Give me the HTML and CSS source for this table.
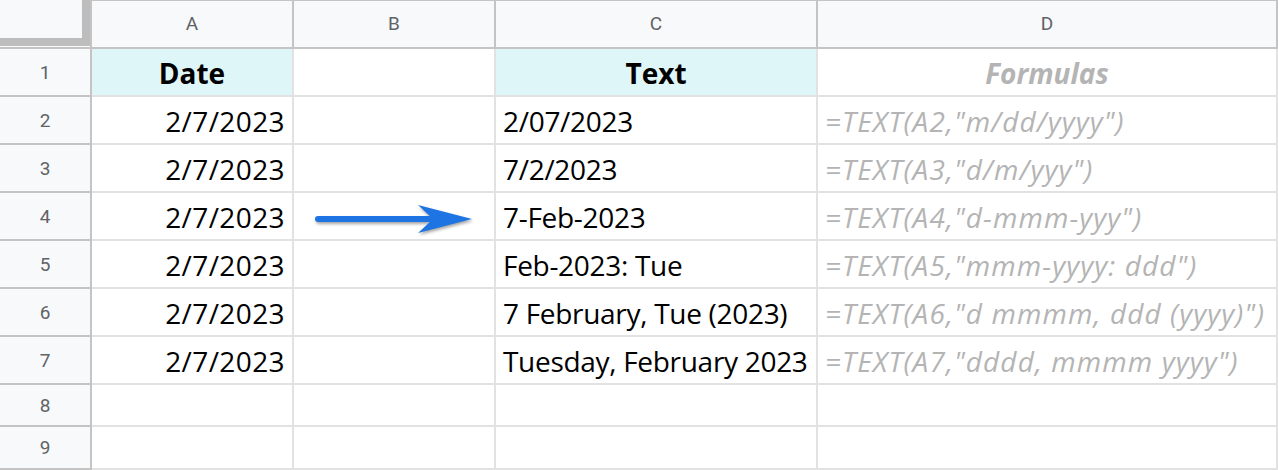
FILE: index.html
```html
<!DOCTYPE html>
<html>
<head>
<meta charset="utf-8">
<link rel="stylesheet" href="styles.css">
</head>
<body>
<div class="sheet">
  <div class="grid">
    <div class="corner"><div class="corner-inner"></div></div>
    <div class="colhead">A</div>
    <div class="colhead">B</div>
    <div class="colhead">C</div>
    <div class="colhead last">D</div>

    <div class="rowhead">1</div>
    <div class="cell hl center bold">Date</div>
    <div class="cell"></div>
    <div class="cell hl center bold">Text</div>
    <div class="cell last center formula bold">Formulas</div>

    <div class="rowhead">2</div>
    <div class="cell right date">2/7/2023</div>
    <div class="cell"></div>
    <div class="cell txt">2/07/2023</div>
    <div class="cell last formula">=TEXT(A2,"m/dd/yyyy")</div>

    <div class="rowhead">3</div>
    <div class="cell right date">2/7/2023</div>
    <div class="cell"></div>
    <div class="cell txt">7/2/2023</div>
    <div class="cell last formula">=TEXT(A3,"d/m/yyy")</div>

    <div class="rowhead">4</div>
    <div class="cell right date">2/7/2023</div>
    <div class="cell"></div>
    <div class="cell txt">7-Feb-2023</div>
    <div class="cell last formula">=TEXT(A4,"d-mmm-yyy")</div>

    <div class="rowhead">5</div>
    <div class="cell right date">2/7/2023</div>
    <div class="cell"></div>
    <div class="cell txt">Feb-2023: Tue</div>
    <div class="cell last formula">=TEXT(A5,"mmm-yyyy: ddd")</div>

    <div class="rowhead">6</div>
    <div class="cell right date">2/7/2023</div>
    <div class="cell"></div>
    <div class="cell txt">7 February, Tue (2023)</div>
    <div class="cell last formula">=TEXT(A6,"d mmmm, ddd (yyyy)")</div>

    <div class="rowhead">7</div>
    <div class="cell right date">2/7/2023</div>
    <div class="cell"></div>
    <div class="cell txt">Tuesday, February 2023</div>
    <div class="cell last formula">=TEXT(A7,"dddd, mmmm yyyy")</div>

    <div class="rowhead short">8</div>
    <div class="cell short"></div>
    <div class="cell short"></div>
    <div class="cell short"></div>
    <div class="cell short last"></div>

    <div class="rowhead short final">9</div>
    <div class="cell short final"></div>
    <div class="cell short final"></div>
    <div class="cell short final"></div>
    <div class="cell short final last"></div>
  </div>
  <svg class="arrow" width="180" height="50" viewBox="0 0 180 50">
    <line x1="13" y1="25" x2="128" y2="25" stroke="#1f74e3" stroke-width="6" stroke-linecap="round"/>
    <polygon points="113,11 167,25 113,39 128,25" fill="#1f74e3"/>
  </svg>
</div>
</body>
</html>
```

FILE: styles.css
```css
html, body {
  margin: 0;
  padding: 0;
  background: #ffffff;
}

.sheet {
  position: relative;
  width: 1278px;
  height: 470px;
  overflow: hidden;
}

.grid {
  display: grid;
  grid-template-columns: 92px 202px 202px 322px 460px;
  grid-template-rows: 49px repeat(7, 48px) 42px 43px;
}

.corner {
  box-sizing: border-box;
  background: #f8f9fa;
  border-top: 1px solid #c4c4c4;
  border-right: 2px solid #c4c4c4;
  border-bottom: 2px solid #c4c4c4;
}

.corner-inner {
  box-sizing: border-box;
  width: 90px;
  height: 46px;
  border-right: 8px solid #bdbdbd;
  border-bottom: 8px solid #bdbdbd;
  background: #f8f9fa;
  margin-top: -1px;
}

.colhead {
  box-sizing: border-box;
  background: #f8f9fa;
  border-top: 1px solid #c4c4c4;
  border-right: 2px solid #c4c4c4;
  border-bottom: 2px solid #c4c4c4;
  display: flex;
  align-items: center;
  justify-content: center;
  font-family: Roboto, "Liberation Sans", sans-serif;
  font-size: 19px;
  color: #5f6368;
  padding-bottom: 1px;
}

.rowhead {
  box-sizing: border-box;
  background: #f8f9fa;
  border-right: 2px solid #c4c4c4;
  border-bottom: 2px solid #c4c4c4;
  display: flex;
  align-items: center;
  justify-content: center;
  font-family: Roboto, "Liberation Sans", sans-serif;
  font-size: 19px;
  color: #5f6368;
}

.cell {
  box-sizing: border-box;
  border-right: 2px solid #e2e2e2;
  border-bottom: 2px solid #e2e2e2;
  display: flex;
  align-items: center;
  padding: 2px 7px 0 7px;
  font-family: "Open Sans", "Noto Sans", sans-serif;
  font-size: 28px;
  color: #000000;
  white-space: nowrap;
  overflow: hidden;
}

.hl {
  background: #dff6f8;
}

.center {
  justify-content: center;
}

.right {
  justify-content: flex-end;
}

.bold {
  font-weight: 700;
}

.date {
  letter-spacing: 0.4px;
}

.txt {
  letter-spacing: -0.3px;
}

.formula {
  color: #b4b4b4;
  font-style: italic;
  letter-spacing: 1.1px;
}

.formula.bold {
  letter-spacing: 0;
}

.arrow {
  position: absolute;
  left: 305px;
  top: 194px;
  filter: drop-shadow(1px 2px 1.5px rgba(0, 0, 0, 0.35));
}
```
